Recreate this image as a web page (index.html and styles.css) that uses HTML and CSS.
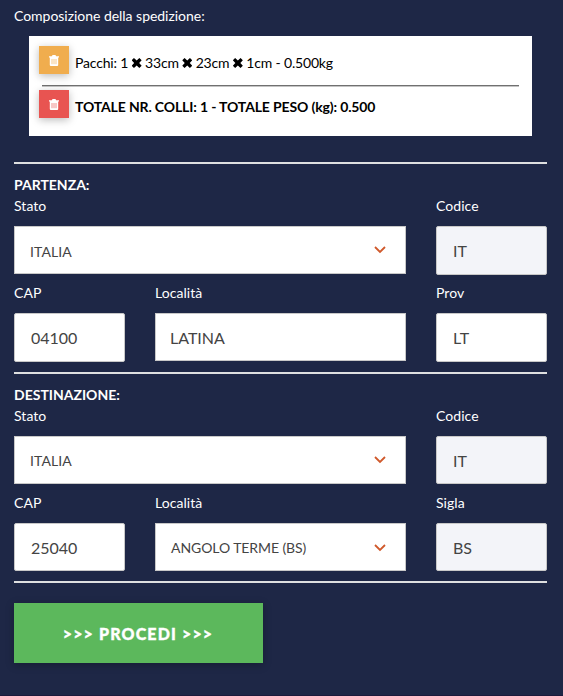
FILE: index.html
```html
<!DOCTYPE html>
<html lang="it"><head><meta charset="utf-8"><title>Spedizione</title><link rel="stylesheet" href="styles.css"></head>
<body>
<main class="page">
<p class="intro">Composizione della spedizione:</p>
<section class="summary">
<div class="row"><button class="trash amber"><svg viewBox="0 0 10 11"><path d="M0 1.2h2.8L3.6 0h2.8l.8 1.2H10v1.3H0zM.8 2.5h8.4V10q0 1-1 1H1.8q-1 0-1-1z"/><path class="slots" d="M3 4v5.2M5 4v5.2M7 4v5.2"/></svg></button><span>Pacchi: 1 <i class="x"></i> 33cm <i class="x"></i> 23cm <i class="x"></i> 1cm - 0.500kg</span></div>
<div class="split"></div>
<div class="row"><button class="trash red"><svg viewBox="0 0 10 11"><path d="M0 1.2h2.8L3.6 0h2.8l.8 1.2H10v1.3H0zM.8 2.5h8.4V10q0 1-1 1H1.8q-1 0-1-1z"/><path class="slots" d="M3 4v5.2M5 4v5.2M7 4v5.2"/></svg></button><b>TOTALE NR. COLLI: 1 - TOTALE PESO (kg): 0.500</b></div>
</section>
<section class="place">
<h2>PARTENZA:</h2>
<div class="grid">
<label class="field wide"><span>Stato</span><div class="box select">ITALIA<svg class="chev" viewBox="0 0 12 8"><path d="M1 1l5 5 5-5"/></svg></div></label>
<label class="field"><span>Codice</span><div class="box tall muted">IT</div></label>
<label class="field"><span>CAP</span><div class="box tall">04100</div></label>
<label class="field"><span>Località</span><div class="box town">LATINA</div></label>
<label class="field"><span>Prov</span><div class="box tall">LT</div></label>
</div>
</section>
<section class="place arrival">
<h2>DESTINAZIONE:</h2>
<div class="grid">
<label class="field wide"><span>Stato</span><div class="box select country">ITALIA<svg class="chev" viewBox="0 0 12 8"><path d="M1 1l5 5 5-5"/></svg></div></label>
<label class="field"><span>Codice</span><div class="box muted">IT</div></label>
<label class="field"><span>CAP</span><div class="box">25040</div></label>
<label class="field"><span>Località</span><div class="box select city">ANGOLO TERME (BS)<svg class="chev" viewBox="0 0 12 8"><path d="M1 1l5 5 5-5"/></svg></div></label>
<label class="field"><span>Sigla</span><div class="box muted">BS</div></label>
</div>
</section>
<footer class="actions"><button class="go">&gt;&gt;&gt; PROCEDI &gt;&gt;&gt;</button></footer>
</main>
</body></html>
```
FILE: styles.css
```css
* { box-sizing: border-box; }
body { margin: 0; background: #1e2746; color: #fff; font: 14px/21px Lato, sans-serif; }
.page { padding: 5px 16px 0 14px; height: 696px; overflow: hidden; border-bottom: 1px solid #1d1a3c; }
.intro { margin: 0; height: 31px; letter-spacing: -.03px; }
.summary { margin: 0 15px 26px; height: 100px; background: #fff; color: #000; padding: 10px; }
.row { display: flex; height: 28px; align-items: flex-start; gap: 6px; }
.row span, .row b { line-height: 34px; white-space: nowrap; letter-spacing: -.17px; }
.row b { letter-spacing: -.14px; }
.trash { width: 30px; height: 28px; border: 0; padding: 0; display: grid; place-items: center; box-shadow: 0 2px 8px #0004; }
.trash svg { width: 10px; height: 11px; fill: #fff; margin-top: 1px; }
.slots { stroke: currentColor; stroke-width: .65; }
.amber { background: #f0ad4e; color: #f0ad4e; }
.red { background: #e85451; color: #e85451; }
.split { height: 2px; background: linear-gradient(#707070 50%, #c4c4c4 50%); margin: 11px 3px 3px; }
.x { display: inline-block; width: 10px; height: 10px; background: #000; clip-path: polygon(23% 0,50% 25%,77% 0,100% 23%,75% 50%,100% 77%,77% 100%,50% 75%,23% 100%,0 77%,25% 50%,0 23%); }
.place { height: 210px; border-top: 2px solid #dedfe0; padding-top: 10px; }
.arrival { height: 209px; }
h2 { margin: 0; font-size: 14px; line-height: 21px; font-weight: 700; }
.grid { display: grid; grid-template-columns: 111px 251px 111px; column-gap: 30px; }
.wide { grid-column: span 2; }
.field { display: block; height: 87px; }
.field > span { display: block; height: 31px; letter-spacing: .05px; }
.box { height: 48px; border: 1px solid #c8c8c8; border-radius: 2px; background: #fff; color: #444; padding: 1px 16px 0; font-size: 16px; display: flex; align-items: center; justify-content: space-between; }
.tall { height: 49px; padding-top: 0; padding-bottom: 1px; }
.town { padding-left: 14px; border-radius: 0; }
.muted { background: #f3f4f9; }
.select { font-size: 14px; border-radius: 0; padding: 2px 19px 0 15px; letter-spacing: .1px; }
.country { padding-top: 1px; }
.city { padding-top: 1px; letter-spacing: -.08px; }
.chev { width: 12px; height: 8px; margin-top: -2px; fill: none; stroke: #d0592b; stroke-width: 1.8; }
.city .chev { margin-top: 0; }
.actions { border-top: 2px solid #dedfe0; padding-top: 20px; }
.go { width: 249px; height: 60px; border: 0; background: #5cb85c; color: #fff; font: 900 16px Lato, sans-serif; letter-spacing: 1.15px; padding: 0 1px 0 0; box-shadow: 0 2px 8px #0004; -webkit-text-stroke: .35px #fff; }
```
